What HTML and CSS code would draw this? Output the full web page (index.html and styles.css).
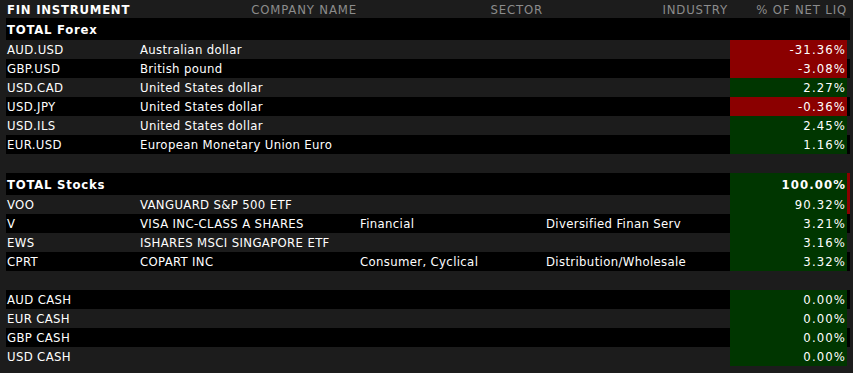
FILE: index.html
```html
<!DOCTYPE html>
<html>
<head>
<meta charset="utf-8">
<link rel="stylesheet" href="styles.css">
</head>
<body>
<div class="table">
  <div class="row head">
    <div class="c c1 b">FIN INSTRUMENT</div>
    <div class="c c2 r">COMPANY NAME</div>
    <div class="c c3 r">SECTOR</div>
    <div class="c c4 r">INDUSTRY</div>
    <div class="c c5 r">% OF NET LIQ</div>
    <div class="c c6"></div>
  </div>

  <div class="row total odd">
    <div class="c c1 b">TOTAL Forex</div><div class="c c2"></div><div class="c c3"></div><div class="c c4"></div><div class="c c5"></div><div class="c c6"></div>
  </div>
  <div class="row even">
    <div class="c c1">AUD.USD</div><div class="c c2">Australian dollar</div><div class="c c3"></div><div class="c c4"></div><div class="c c5 r neg">-31.36%</div><div class="c c6"></div>
  </div>
  <div class="row odd">
    <div class="c c1">GBP.USD</div><div class="c c2">British pound</div><div class="c c3"></div><div class="c c4"></div><div class="c c5 r neg">-3.08%</div><div class="c c6"></div>
  </div>
  <div class="row even">
    <div class="c c1">USD.CAD</div><div class="c c2">United States dollar</div><div class="c c3"></div><div class="c c4"></div><div class="c c5 r pos">2.27%</div><div class="c c6"></div>
  </div>
  <div class="row odd">
    <div class="c c1">USD.JPY</div><div class="c c2">United States dollar</div><div class="c c3"></div><div class="c c4"></div><div class="c c5 r neg">-0.36%</div><div class="c c6"></div>
  </div>
  <div class="row even">
    <div class="c c1">USD.ILS</div><div class="c c2">United States dollar</div><div class="c c3"></div><div class="c c4"></div><div class="c c5 r pos">2.45%</div><div class="c c6"></div>
  </div>
  <div class="row odd">
    <div class="c c1">EUR.USD</div><div class="c c2">European Monetary Union Euro</div><div class="c c3"></div><div class="c c4"></div><div class="c c5 r pos">1.16%</div><div class="c c6"></div>
  </div>
  <div class="row even blank"></div>

  <div class="row total odd">
    <div class="c c1 b">TOTAL Stocks</div><div class="c c2"></div><div class="c c3"></div><div class="c c4"></div><div class="c c5 r pos b">100.00%</div><div class="c c6 flag"></div>
  </div>
  <div class="row even">
    <div class="c c1">VOO</div><div class="c c2">VANGUARD S&amp;P 500 ETF</div><div class="c c3"></div><div class="c c4"></div><div class="c c5 r pos">90.32%</div><div class="c c6 flag"></div>
  </div>
  <div class="row odd">
    <div class="c c1">V</div><div class="c c2">VISA INC-CLASS A SHARES</div><div class="c c3">Financial</div><div class="c c4">Diversified Finan Serv</div><div class="c c5 r pos">3.21%</div><div class="c c6"></div>
  </div>
  <div class="row even">
    <div class="c c1">EWS</div><div class="c c2">ISHARES MSCI SINGAPORE ETF</div><div class="c c3"></div><div class="c c4"></div><div class="c c5 r pos">3.16%</div><div class="c c6"></div>
  </div>
  <div class="row odd">
    <div class="c c1">CPRT</div><div class="c c2">COPART INC</div><div class="c c3">Consumer, Cyclical</div><div class="c c4">Distribution/Wholesale</div><div class="c c5 r pos">3.32%</div><div class="c c6"></div>
  </div>
  <div class="row even blank"></div>

  <div class="row odd">
    <div class="c c1">AUD CASH</div><div class="c c2"></div><div class="c c3"></div><div class="c c4"></div><div class="c c5 r pos">0.00%</div><div class="c c6"></div>
  </div>
  <div class="row even">
    <div class="c c1">EUR CASH</div><div class="c c2"></div><div class="c c3"></div><div class="c c4"></div><div class="c c5 r pos">0.00%</div><div class="c c6"></div>
  </div>
  <div class="row odd">
    <div class="c c1">GBP CASH</div><div class="c c2"></div><div class="c c3"></div><div class="c c4"></div><div class="c c5 r pos">0.00%</div><div class="c c6"></div>
  </div>
  <div class="row even">
    <div class="c c1">USD CASH</div><div class="c c2"></div><div class="c c3"></div><div class="c c4"></div><div class="c c5 r pos">0.00%</div><div class="c c6"></div>
  </div>
</div>
</body>
</html>
```

FILE: styles.css
```css
html, body {
  margin: 0;
  padding: 0;
  background: #1c1c1c;
}
body {
  width: 853px;
  height: 373px;
  overflow: hidden;
  font-family: "DejaVu Sans Condensed", "DejaVu Sans", sans-serif;
  font-size: 13px;
  letter-spacing: 0.35px;
  color: #ffffff;
}
.table {
  padding-left: 6px;
  width: 844px;
}
.row {
  display: grid;
  grid-template-columns: 133px 220px 186px 185px 117px 3px;
  height: 19px;
  align-items: stretch;
}
.row.head {
  height: 18px;
  color: #8c8c8c;
  letter-spacing: 0.85px;
}
.row.total {
  height: 22px;
}
.odd { background: #000000; }
.even { background: #1c1c1c; }
.c {
  display: flex;
  align-items: center;
  padding-left: 1px;
  white-space: nowrap;
  overflow: hidden;
}
.r {
  justify-content: flex-end;
  padding-left: 0;
  padding-right: 2px;
}
.c5.r {
  letter-spacing: 1.1px;
  padding-right: 1px;
}
.head .c5 {
  padding-right: 0;
  letter-spacing: 0.85px;
  overflow: visible;
}
.head .c1 { color: #ffffff; }
.b {
  font-weight: bold;
  letter-spacing: 0.75px;
}
.c5.b { letter-spacing: 1.1px; }
.neg { background: #8b0000; }
.pos { background: #003600; }
.flag { background: #8b0000; }
```
